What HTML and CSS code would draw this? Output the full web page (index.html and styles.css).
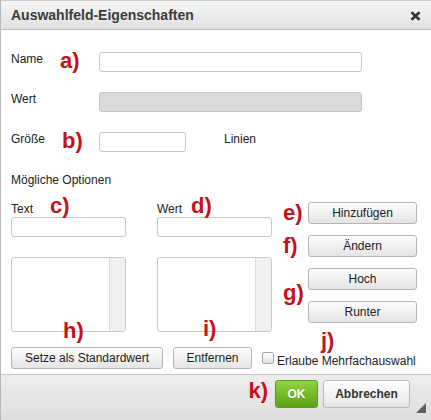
FILE: index.html
```html
<!DOCTYPE html>
<html lang="de">
<head>
    <meta charset="UTF-8">
    <meta name="viewport" content="width=device-width, initial-scale=1.0">
    <title>Auswahlfeld-Eigenschaften</title>
    <link rel="stylesheet" href="styles.css">
</head>
<body>
    <div class="dialog">
        <div class="titlebar">
            <span class="title">Auswahlfeld-Eigenschaften</span>
            <svg class="close" width="11" height="10" viewBox="0 0 11 10">
                <path d="M1.5 1.3 L9.5 8.7 M9.5 1.3 L1.5 8.7" stroke="#333" stroke-width="2.6" fill="none"/>
            </svg>
        </div>

        <div class="content">
            <div class="field">
                <label class="lbl">Name</label>
                <span class="mark field-mark">a)</span>
                <input type="text" class="txt wide">
            </div>
            <div class="field">
                <label class="lbl">Wert</label>
                <span class="mark field-mark"></span>
                <input type="text" class="txt wide" disabled>
            </div>
            <div class="field">
                <label class="lbl">Größe</label>
                <span class="mark field-mark mark-b">b)</span>
                <input type="text" class="txt short">
                <span class="unit">Linien</span>
            </div>

            <div class="section-title">Mögliche Optionen</div>

            <div class="options">
                <div class="col">
                    <div class="col-head">
                        <span class="col-label text-label">Text</span>
                        <span class="mark">c)</span>
                    </div>
                    <input type="text" class="txt col-input">
                    <div class="listbox"><div class="scroll"></div></div>
                </div>
                <div class="col col-value">
                    <div class="col-head">
                        <span class="col-label value-label">Wert</span>
                        <span class="mark">d)</span>
                    </div>
                    <input type="text" class="txt col-input">
                    <div class="listbox"><div class="scroll"></div></div>
                </div>
                <div class="side">
                    <span class="mark side-mark">e)</span>
                    <button class="btn side-btn">Hinzufügen</button>
                    <span class="mark side-mark">f)</span>
                    <button class="btn side-btn">Ändern</button>
                    <span class="mark side-mark mark-g">g)</span>
                    <button class="btn side-btn btn-up">Hoch</button>
                    <button class="btn side-btn btn-down">Runter</button>
                </div>
            </div>

            <div class="actions">
                <button class="btn btn-default">Setze als Standardwert</button>
                <button class="btn btn-remove">Entfernen</button>
                <label class="multi">
                    <input type="checkbox" class="check">
                    <span class="multi-text">Erlaube Mehrfachauswahl</span>
                </label>
                <span class="mark note note-h">h)</span>
                <span class="mark note note-i">i)</span>
                <span class="mark note note-j">j)</span>
            </div>
        </div>

        <div class="footer">
            <span class="mark mark-k">k)</span>
            <button class="btn-ok">OK</button>
            <button class="btn-cancel">Abbrechen</button>
            <span class="grip"></span>
        </div>
    </div>
</body>
</html>
```

FILE: styles.css
```css
body {
    margin: 0;
    font-family: "Liberation Sans", Arial, sans-serif;
    font-size: 12px;
    color: #222;
    background-color: #fff;
}

.dialog {
    width: 431px;
    height: 420px;
    display: flex;
    flex-direction: column;
    border-left: 1px solid #b9b9b9;
    box-sizing: border-box;
}

.titlebar {
    height: 28px;
    border-top: 1px solid #c9c9c9;
    border-bottom: 1px solid #bcbcbc;
    background: linear-gradient(#f6f6f6, #e0e0e0);
    display: flex;
    align-items: center;
    justify-content: space-between;
    padding: 0 10px 0 10px;
}

.title {
    font-size: 14px;
    font-weight: bold;
    color: #3c3c3c;
}

.close {
    display: block;
    margin-top: 1px;
}

.content {
    flex: 1;
    padding: 22px 0 0 10px;
}

/* red annotation letters */
.mark {
    font-size: 22px;
    font-weight: bold;
    color: #c3121b;
    line-height: 18px;
}

.field {
    display: flex;
    align-items: flex-start;
    height: 20px;
    margin-bottom: 20px;
}

.lbl {
    width: 49px;
    line-height: 14px;
}

.field-mark {
    width: 39px;
}

.mark-b {
    padding-left: 2px;
    width: 37px;
}

.txt {
    box-sizing: border-box;
    height: 20px;
    border: 1px solid #c8c8c8;
    border-radius: 3px;
    background-color: #fff;
    padding: 0 4px;
    margin: 0;
    font-family: inherit;
    font-size: 12px;
}

.txt:disabled {
    background-color: #dadada;
    border-color: #c6c6c6;
}

.wide {
    width: 263px;
}

.short {
    width: 87px;
}

.unit {
    margin-left: 38px;
    line-height: 14px;
}

.section-title {
    line-height: 14px;
    margin-top: 21px;
}

.options {
    display: flex;
    margin-top: 10px;
}

.col {
    width: 115px;
}

.col-value {
    margin-left: 31px;
}

.col-head {
    display: flex;
    align-items: baseline;
    height: 20px;
}

.col-label {
    line-height: 14px;
}

.text-label {
    width: 39px;
}

.value-label {
    width: 34px;
}

.col-input {
    width: 115px;
    display: block;
}

.listbox {
    margin-top: 20px;
    height: 75px;
    box-sizing: border-box;
    border: 1px solid #c9c9c9;
    border-radius: 3px;
    overflow: hidden;
    display: flex;
    justify-content: flex-end;
    background-color: #fff;
}

.scroll {
    width: 15px;
    background-color: #f0f0f0;
    border-left: 1px solid #dcdcdc;
}

.side {
    margin-left: 10px;
    padding-top: 5px;
    display: grid;
    grid-template-columns: 26px 109px;
    grid-template-rows: repeat(4, 22px);
    row-gap: 11px;
}

.side-mark {
    line-height: 22px;
    padding-left: 1px;
}

.mark-g {
    grid-column: 1;
    grid-row: 3 / span 2;
    align-self: center;
    margin-bottom: 6px;
}

.btn-up {
    grid-column: 2;
    grid-row: 3;
}

.btn-down {
    grid-column: 2;
    grid-row: 4;
}

.btn {
    box-sizing: border-box;
    height: 22px;
    padding: 0;
    margin: 0;
    border: 1px solid #b5b5b5;
    border-radius: 3px;
    background: linear-gradient(#fdfdfd, #e4e4e4);
    font-family: inherit;
    font-size: 12px;
    line-height: 20px;
    color: #222;
    cursor: pointer;
}

.side-btn {
    width: 109px;
}

.actions {
    position: relative;
    display: flex;
    align-items: center;
    gap: 10px;
    margin-top: 15px;
}

.btn-default {
    width: 152px;
}

.btn-remove {
    width: 79px;
}

.multi {
    display: flex;
    align-items: center;
    gap: 3px;
    white-space: nowrap;
}

.check {
    appearance: none;
    width: 12px;
    height: 12px;
    margin: 0;
    box-sizing: border-box;
    border: 1px solid #a8a8a8;
    border-radius: 2px;
    background: linear-gradient(#fbfbfb, #e2e2e2);
}

.multi-text {
    line-height: 14px;
    padding-top: 6px;
}

.note {
    position: absolute;
    line-height: 22px;
}

.note-h {
    left: 52px;
    top: -27px;
}

.note-i {
    left: 192px;
    top: -29px;
}

.note-j {
    left: 310px;
    top: -17px;
}

.footer {
    position: relative;
    height: 40px;
    border-top: 1px solid #c6c6c6;
    background: linear-gradient(#ededed, #dedede);
    display: flex;
    justify-content: flex-end;
    align-items: flex-start;
    gap: 5px;
    padding: 5px 21px 0 0;
    box-sizing: content-box;
}

.mark-k {
    line-height: 22px;
    margin-right: 2px;
}

.btn-ok, .btn-cancel {
    box-sizing: border-box;
    height: 28px;
    margin: 0;
    padding: 0;
    border-radius: 3px;
    font-family: inherit;
    font-size: 12px;
    font-weight: bold;
    cursor: pointer;
}

.btn-ok {
    width: 43px;
    border: 1px solid #5b9b1d;
    background: linear-gradient(#92d442, #5aa312);
    color: #fff;
    text-shadow: 0 -1px 0 rgba(0, 0, 0, 0.15);
}

.btn-cancel {
    width: 87px;
    border: 1px solid #b9b9b9;
    background: linear-gradient(#ffffff, #e6e6e6);
    color: #333;
}

.grip {
    position: absolute;
    right: 5px;
    bottom: 7px;
    width: 0;
    height: 0;
    border-left: 10px solid transparent;
    border-bottom: 10px solid #5f5f5f;
}
```
